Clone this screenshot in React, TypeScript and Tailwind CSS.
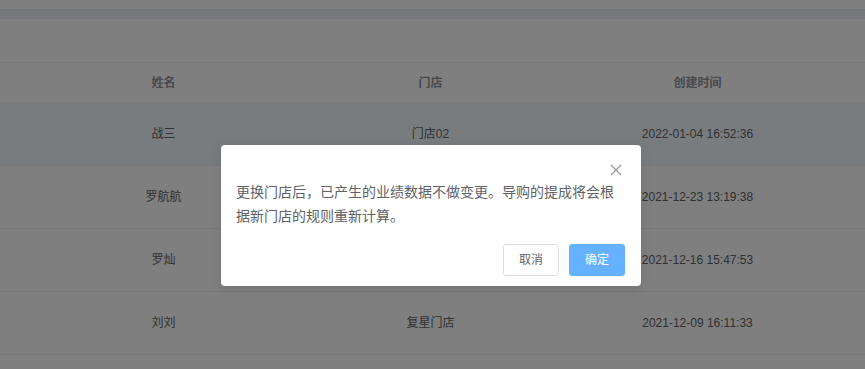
const font = "font-['Liberation_Sans','Noto_Sans_CJK_SC',sans-serif]";

const rows = [
  { name: "战三", store: "门店02", time: "2022-01-04 16:52:36" },
  { name: "罗航航", store: "", time: "2021-12-23 13:19:38" },
  { name: "罗灿", store: "", time: "2021-12-16 15:47:53" },
  { name: "刘刘", store: "复星门店", time: "2021-12-09 16:11:33" },
];

const App = () => {
  return (
    <div className={`relative h-[369px] w-[865px] overflow-hidden bg-white ${font}`}>
      {/* top bars */}
      <div className="h-[9px]" />
      <div className="h-[10px] bg-[#ebeef5]" />
      <div className="h-[43px]" />

      {/* table */}
      <div className="border-t border-[#ebeef5]">
        <div className="grid h-[40px] grid-cols-[267px_267px_267px] items-center pl-[30px] text-[12px] font-bold text-[#909399]">
          <div className="text-center">姓名</div>
          <div className="text-center">门店</div>
          <div className="text-center">创建时间</div>
        </div>
        {rows.map(({ name, store, time }, i) => (
          <div
            key={`row-${i}`}
            className={`grid h-[63px] grid-cols-[267px_267px_267px] items-center border-b border-[#ebeef5] pl-[30px] text-[12px] text-[#606266] ${
              i === 0 ? "bg-[#f3f9fe]" : ""
            }`}
          >
            <div className="text-center">{name}</div>
            <div className="text-center">{store}</div>
            <div className="text-center">{time}</div>
          </div>
        ))}
      </div>

      {/* overlay + message box */}
      <div className="absolute inset-0 bg-black/50">
        <div className="absolute left-[221px] top-[145px] w-[420px] rounded-[4px] bg-white pb-[10px] shadow-[0_2px_12px_rgba(0,0,0,0.1)]">
          <button className="absolute left-[389px] top-[19px] flex h-[12px] w-[12px] items-center justify-center">
            <svg width="12" height="12" viewBox="0 0 12 12" fill="none" stroke="#909399" strokeWidth="1.2">
              <path d="M1 1L11 11M11 1L1 11" />
            </svg>
          </button>
          <div className="h-[25px]" />
          <div className="px-[15px] py-[10px] text-[14px] leading-[24px] text-[#606266]">
            更换门店后，已产生的业绩数据不做变更。导购的提成将会根据新门店的规则重新计算。
          </div>
          <div className="flex justify-end gap-[10px] px-[16px] pt-[6px]">
            <button className="h-[32px] w-[56px] rounded-[3px] border border-[#dcdfe6] bg-white text-[12px] text-[#606266]">
              取消
            </button>
            <button className="h-[32px] w-[56px] rounded-[3px] border border-[#66b1ff] bg-[#66b1ff] text-[12px] text-white">
              确定
            </button>
          </div>
        </div>
      </div>
    </div>
  );
};

export default App;
